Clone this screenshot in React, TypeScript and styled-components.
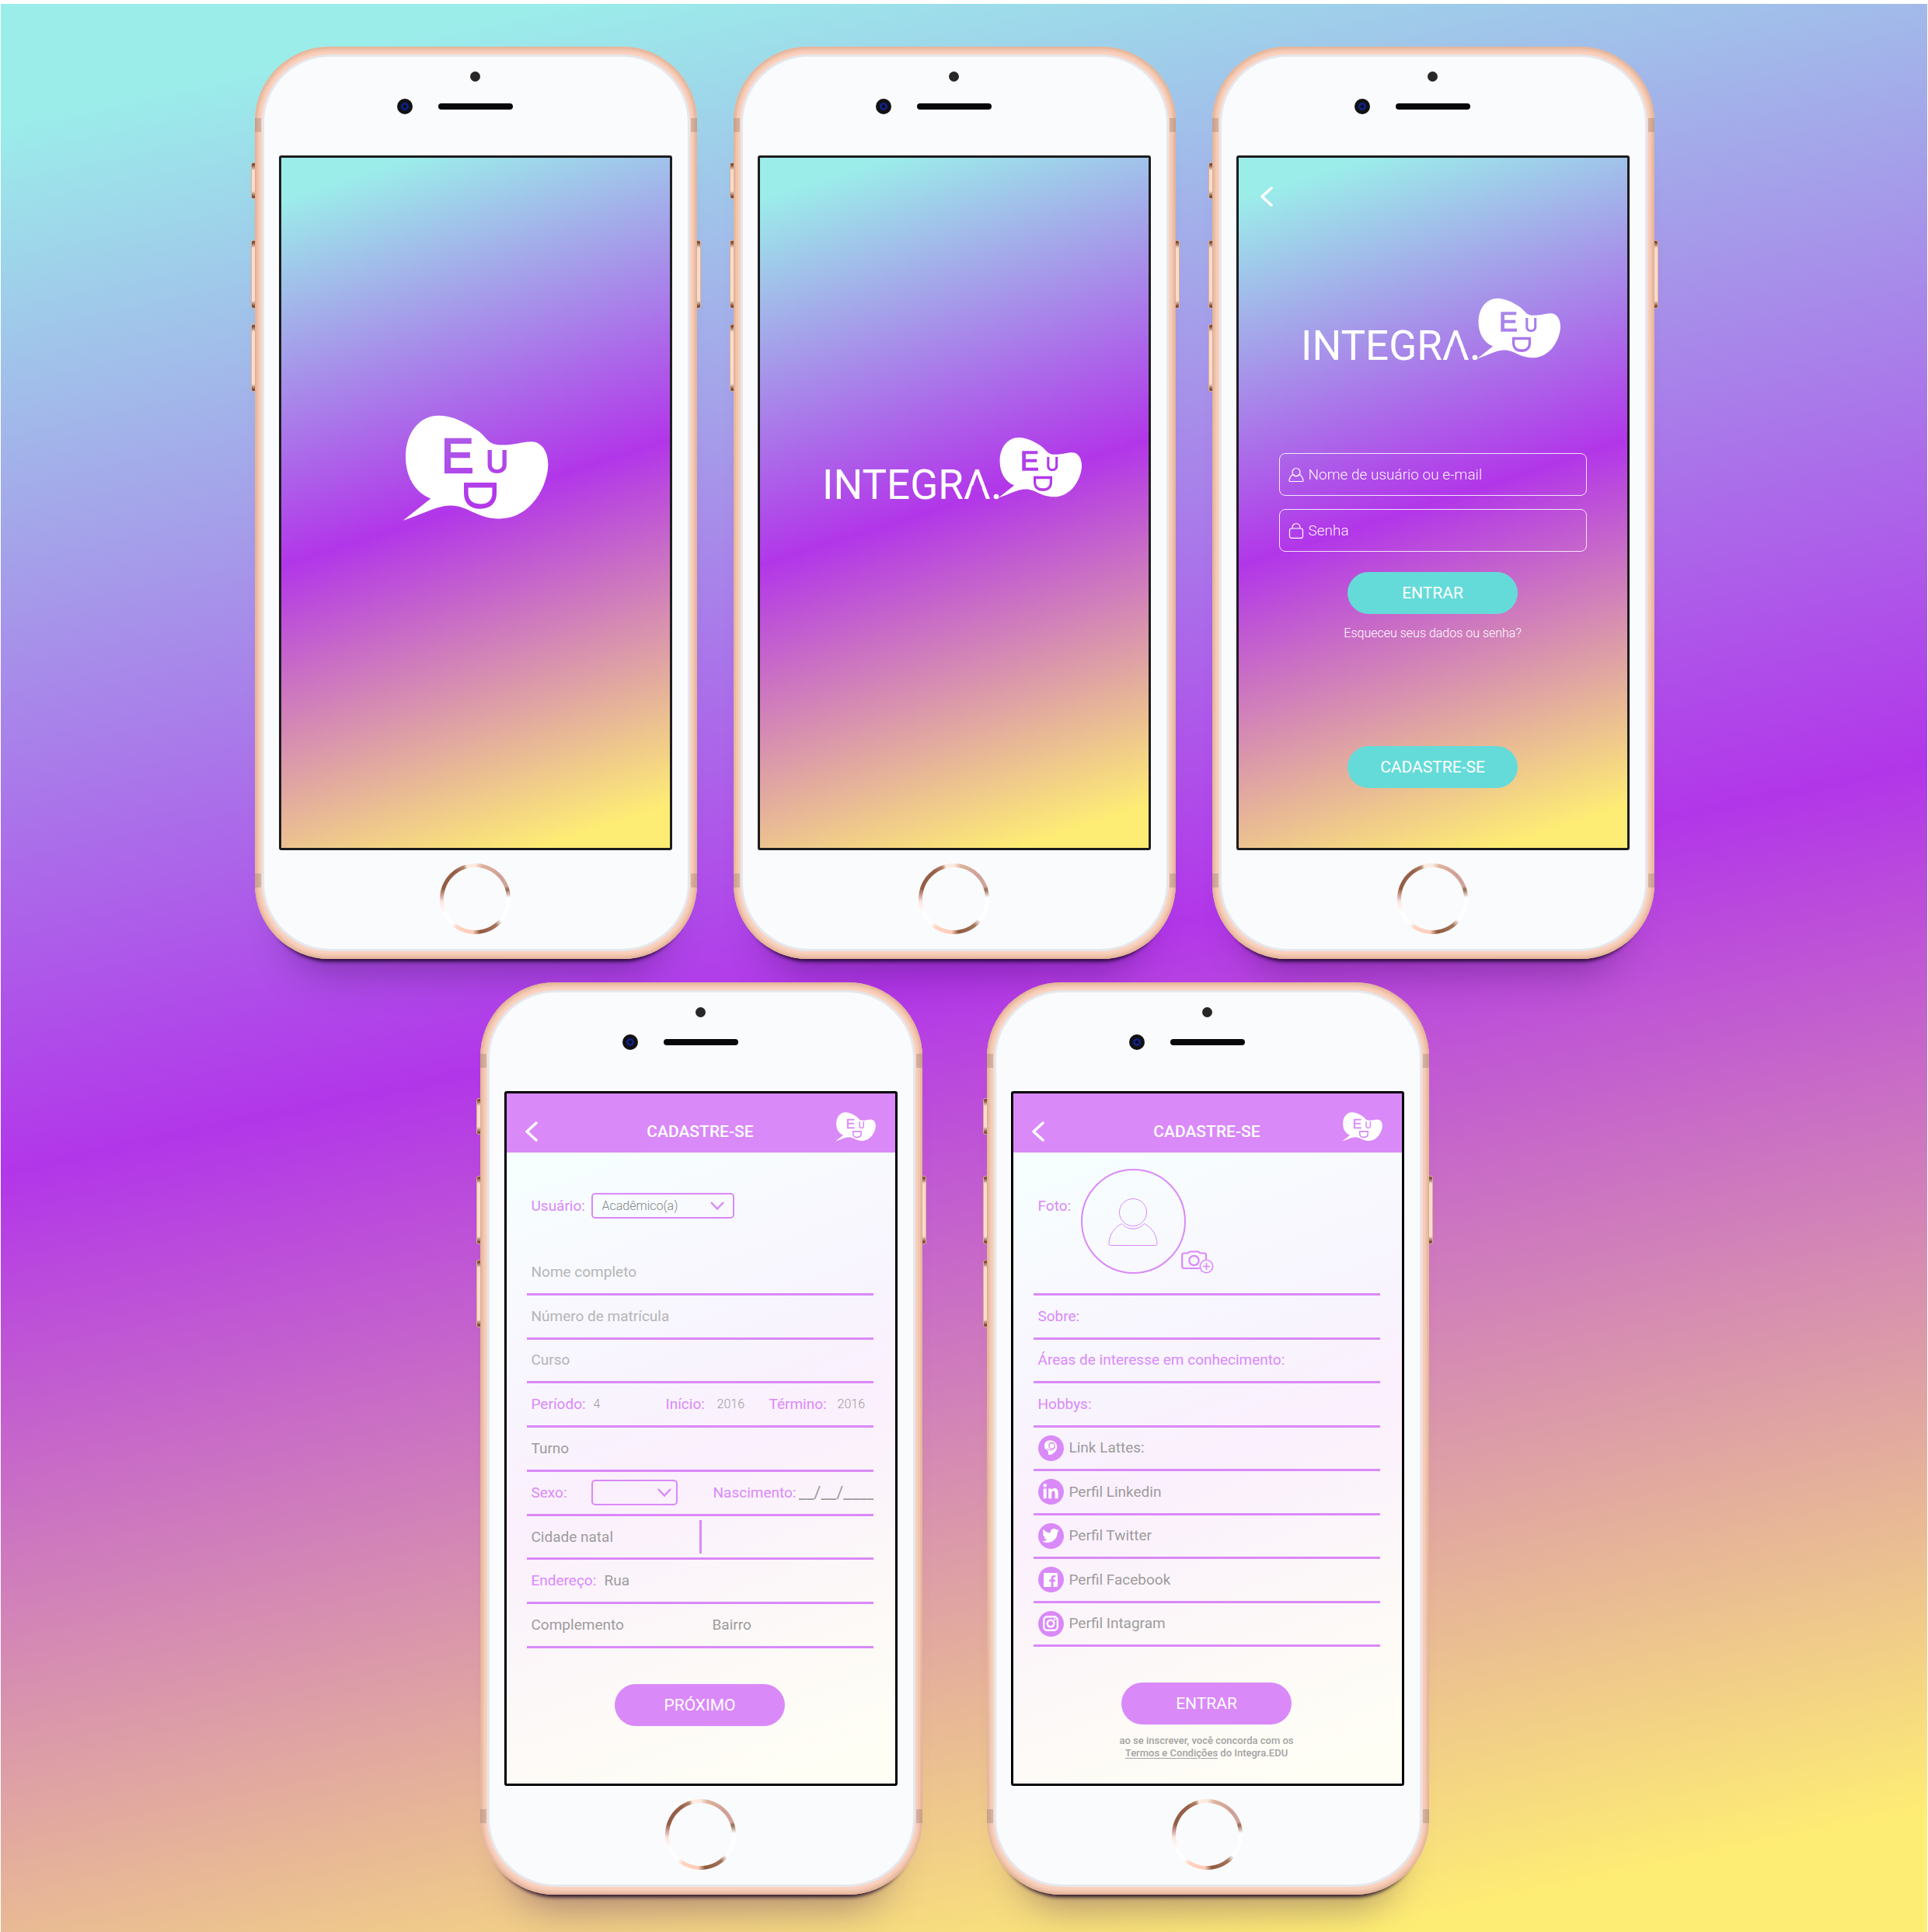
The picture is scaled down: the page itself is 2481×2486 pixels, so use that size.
import React from 'react';
import styled, { createGlobalStyle, css } from 'styled-components';
import { FaLinkedinIn, FaTwitter } from 'react-icons/fa';

const color = {
  teal: '#9bedea',
  purple: '#b236e9',
  yellow: '#feed74',
  aqua: '#65dbd9',
  lilac: '#da89f8',
  grey: '#9c9c9c',
  greyLight: '#b5b5b5',
  ink: '#1d1d1f',
};

const brandStops = `${color.teal} 5%, ${color.purple} 50%, ${color.yellow} 95%`;

const GlobalStyle = createGlobalStyle`
  *, *::before, *::after { box-sizing: border-box; }
  body {
    margin: 0;
    font-family: Roboto, "Liberation Sans", sans-serif;
    font-size: 19px;
    line-height: 24px;
  }
  button, input, select { font: inherit; color: inherit; }
`;

/* ---------- page ---------- */

const Page = styled.main`
  min-height: 100vh;
  display: flex;
  flex-direction: column;
  gap: 30px;
  padding: 55px 25px 48px 0;
  border: solid #fff;
  border-width: 5px 1px 1px;
  background: linear-gradient(168deg, ${brandStops});
`;

const PhoneRow = styled.section<{ $gap: number }>`
  display: flex;
  flex-wrap: wrap;
  justify-content: center;
  gap: 30px ${(p) => p.$gap}px;
`;

/* ---------- phone ---------- */

const Body = styled.article`
  position: relative;
  width: 569px;
  padding: 10px 9px;
  border-radius: 96px;
  background: #fdd5c2;
  box-shadow:
    inset 0 0 7px 3px #dba98c,
    0 15px 5px -12px rgba(20, 0, 35, 0.9),
    0 60px 50px -45px rgba(40, 0, 70, 0.35);
`;

const Band = styled.span<{ $side: 'left' | 'right'; $edge: 'top' | 'bottom' }>`
  position: absolute;
  width: 8px;
  height: 18px;
  background: rgba(150, 120, 105, 0.35);
  ${(p) => p.$side}: 0;
  ${(p) => p.$edge}: 92px;
`;

const SideKey = styled.span<{ $side: 'left' | 'right'; $top: number; $height: number }>`
  position: absolute;
  top: ${(p) => p.$top}px;
  width: 6px;
  height: ${(p) => p.$height}px;
  background: linear-gradient(#7a4a35 2px, #fbdccc 9px, #fbdccc calc(100% - 9px), #7a4a35 calc(100% - 2px));
  border: 1px solid #dcae95;
  ${(p) =>
    p.$side === 'left'
      ? css`
          left: -5px;
          border-radius: 3px 0 0 3px;
        `
      : css`
          right: -5px;
          border-radius: 0 3px 3px 0;
        `}
`;

const Glass = styled.div`
  display: flex;
  flex-direction: column;
  padding: 0 20px 0 19px;
  border: 3px solid #e6e7ea;
  border-radius: 88px;
  background: #fafbfd;
  box-shadow: 0 0 2px #f6c9c4;
`;

const TopBezel = styled.div`
  height: 127px;
  display: flex;
  flex-direction: column;
  align-items: center;
  gap: 22px;
  padding-top: 19px;
`;

const Sensor = styled.span`
  width: 13px;
  height: 13px;
  border-radius: 50%;
  background: #272727;
`;

const Earpiece = styled.div`
  align-self: stretch;
  display: grid;
  grid-template-columns: 1fr 96px 1fr;
  align-items: center;
`;

const Lens = styled.span`
  justify-self: end;
  width: 20px;
  height: 20px;
  margin-right: 33px;
  border: 5px solid #121214;
  border-radius: 50%;
  background: radial-gradient(#050a20 25%, #13269a 45%, #0a1346);
`;

const Speaker = styled.span`
  height: 8px;
  border-radius: 4px;
  background: #08080a;
`;

const BottomBezel = styled.div`
  height: 127px;
  display: flex;
  justify-content: center;
  padding-top: 17px;
`;

const HomeButton = styled.button`
  width: 91px;
  height: 91px;
  padding: 0;
  border: 0;
  border-radius: 50%;
  background:
    radial-gradient(circle, #fafbfd 40px, transparent 41px),
    conic-gradient(
      #fbeae0 0deg, #dfb39c 12deg, #cf9f96 45deg, #d0a59b 68deg, #97684d 74deg, #ffffff 88deg,
      #ffffff 130deg, #a5745a 142deg, #8f5a3f 172deg, #ffcdb8 184deg, #ffd3c1 212deg, #ffffff 222deg,
      #ffffff 245deg, #fde6e2 265deg, #cf9f96 276deg, #935c43 288deg, #96614a 325deg, #b48368 340deg,
      #fdece2 346deg, #fbeae0 360deg
    );
`;

type ScreenTone = 'brand' | 'pale';

const Screen = styled.div<{ $tone: ScreenTone }>`
  height: 894px;
  display: flex;
  flex-direction: column;
  border: 3px solid ${(p) => (p.$tone === 'brand' ? color.ink : '#000')};
  border-radius: 3px;
  background: ${(p) =>
    p.$tone === 'brand'
      ? `linear-gradient(162deg, ${brandStops})`
      : 'linear-gradient(160deg, #f6fffe 9%, #f8fafe 22%, #f8f4fe 40%, #fbf0fd 53%, #fcf8f8 74%, #fffef5 95%)'};
`;

function Phone({ tone = 'brand', children }: { tone?: ScreenTone; children: React.ReactNode }) {
  return (
    <Body>
      <SideKey $side="left" $top={149} $height={47} />
      <SideKey $side="left" $top={249} $height={88} />
      <SideKey $side="left" $top={357} $height={87} />
      <SideKey $side="right" $top={249} $height={88} />
      <Band $side="left" $edge="top" />
      <Band $side="right" $edge="top" />
      <Band $side="left" $edge="bottom" />
      <Band $side="right" $edge="bottom" />
      <Glass>
        <TopBezel>
          <Sensor />
          <Earpiece>
            <Lens />
            <Speaker />
          </Earpiece>
        </TopBezel>
        <Screen $tone={tone}>{children}</Screen>
        <BottomBezel>
          <HomeButton type="button" aria-label="Início" />
        </BottomBezel>
      </Glass>
    </Body>
  );
}

/* ---------- brand marks ---------- */

const bubblePath =
  'M57 479L164 394C100 370 67 305 67 232C67 140 120 73 195 73C255 73 315 110 350 134C385 162 385 187 440 187C490 187 520 174 552 174C595 174 618 215 618 262C618 340 555 472 430 472C340 472 310 421 240 421C190 421 130 455 57 479Z';

function BubbleShape({ id }: { id: string }) {
  return (
    <>
      <mask id={id} maskUnits="userSpaceOnUse" x="50" y="66" width="580" height="420">
        <rect x="50" y="66" width="580" height="420" fill="#fff" />
        <g fill="#000">
          <text x="205" y="294" fontSize="187" fontFamily="Liberation Sans, sans-serif" stroke="#000" strokeWidth="7">E</text>
          <text x="375" y="297" fontSize="124" fontFamily="Inter, sans-serif" fontWeight="600">U</text>
          <text transform="translate(292 319) rotate(90)" x="0" y="0" fontSize="172" fontFamily="Inter, sans-serif" fontWeight="500">D</text>
        </g>
      </mask>
      <path d={bubblePath} fill="#fff" mask={`url(#${id})`} />
    </>
  );
}

const BubbleSvg = styled.svg<{ $width: number }>`
  display: block;
  width: ${(p) => p.$width}px;
  height: auto;
`;

function Bubble({ id, width }: { id: string; width: number }) {
  return (
    <BubbleSvg $width={width} viewBox="55 71 565 410" role="img" aria-label="EUD">
      <BubbleShape id={id} />
    </BubbleSvg>
  );
}

const LogoSvg = styled.svg`
  display: block;
  width: 342px;
  height: auto;
  overflow: visible;
`;

function Logo({ id }: { id: string }) {
  return (
    <LogoSvg viewBox="45 66 1026 243" role="img" aria-label="Integra.EDU">
      <mask id={`${id}-word`} maskUnits="userSpaceOnUse" x="40" y="130" width="680" height="230">
        <rect x="40" y="130" width="680" height="230" fill="#fff" />
        <path d="M627 255H663L670 282H620Z" fill="#000" />
      </mask>
      <text x="48" y="305" fontFamily="Roboto, sans-serif" fontSize="159" fill="#fff" mask={`url(#${id}-word)`}>INTEGRA</text>
      <circle cx="720" cy="297" r="10" fill="#fff" />
      <g transform="translate(695.3 27.1) scale(.574)">
        <BubbleShape id={`${id}-bubble`} />
      </g>
    </LogoSvg>
  );
}

/* ---------- shared controls ---------- */

const BackButton = styled.button`
  width: 16px;
  height: 28px;
  padding: 0;
  border: 0;
  background: none;
  color: #fff;
  svg { display: block; width: 16px; height: 28px; }
`;

function Back() {
  return (
    <BackButton type="button" aria-label="Voltar">
      <svg viewBox="0 0 16 28" fill="none" stroke="currentColor" strokeWidth="3.500" strokeLinecap="round" strokeLinejoin="round">
        <path d="M14 3L2 14L14 25" />
      </svg>
    </BackButton>
  );
}

const Pill = styled.button<{ $tint: string }>`
  width: 219px;
  height: 54px;
  flex: none;
  align-self: center;
  padding: 0;
  border: 0;
  border-radius: 27px;
  background: ${(p) => p.$tint};
  color: #fff;
  font-size: 21px;
`;

/* ---------- splash ---------- */

const Splash = styled.div`
  flex: 1;
  display: flex;
  align-items: center;
  justify-content: center;
  padding-bottom: 90px;
`;

/* ---------- login ---------- */

const Login = styled.form`
  flex: 1;
  display: flex;
  flex-direction: column;
  align-items: center;
  padding: 36px 52px 0;
  color: #fff;
`;

const LoginTop = styled.div`
  display: flex;
  align-self: flex-start;
  margin-left: -24px;
  margin-bottom: 116px;
`;

const LoginFields = styled.div`
  align-self: stretch;
  display: grid;
  gap: 17px;
  margin: 119px 0 26px;
`;

const LoginField = styled.label`
  height: 55px;
  display: flex;
  align-items: center;
  gap: 6px;
  padding: 0 11px;
  border: 1px solid rgba(255, 255, 255, 0.85);
  border-radius: 8px;
  svg { flex: none; width: 20px; height: 20px; }
`;

const LoginInput = styled.input`
  flex: 1;
  min-width: 0;
  padding: 0;
  border: 0;
  background: none;
  outline: none;
  font-size: 19px;
  font-weight: 300;
  &::placeholder { color: #fff; opacity: 0.95; }
`;

const ForgotLink = styled.a`
  margin: 13px 0 133px;
  color: #fff;
  font-size: 16px;
  font-weight: 300;
  text-decoration: none;
`;

/* ---------- sign-up ---------- */

const Header = styled.header`
  height: 76px;
  flex: none;
  display: grid;
  grid-template-columns: 52px 1fr 52px;
  align-items: center;
  padding: 22px 25px 0 24px;
  background: ${color.lilac};
  color: #fff;
`;

const Title = styled.h1`
  margin: 0;
  text-align: center;
  font-size: 21px;
  font-weight: 500;
`;

const MarkSlot = styled.div`
  padding-bottom: 12px;
`;

function SignUpHeader({ id }: { id: string }) {
  return (
    <Header>
      <Back />
      <Title>CADASTRE-SE</Title>
      <MarkSlot>
        <Bubble id={id} width={52} />
      </MarkSlot>
    </Header>
  );
}

const Form = styled.form`
  flex: 1;
  display: flex;
  flex-direction: column;
  padding: 0 28px 0 26px;
  color: ${color.grey};
`;

const UserType = styled.div`
  height: 127px;
  display: grid;
  grid-template-columns: 77px 184px;
  align-content: start;
  align-items: center;
  padding: 52px 0 0 6px;
`;

const Rows = styled.div`
  flex: 1;
  display: flex;
  flex-direction: column;
`;

const Row = styled.div<{ $columns?: string }>`
  flex: 1;
  display: grid;
  grid-template-columns: ${(p) => p.$columns ?? '1fr'};
  align-items: center;
  padding-left: 6px;
  border-bottom: 3px solid ${color.lilac};
`;

const Label = styled.label`
  color: ${color.lilac};
`;

const Input = styled.input<{ $kind?: 'value' | 'light' | 'date' }>`
  width: 100%;
  min-width: 0;
  padding: 0;
  border: 0;
  background: none;
  outline: none;
  &::placeholder {
    color: ${(p) => (p.$kind === 'light' ? color.greyLight : color.grey)};
    opacity: 1;
  }
  ${(p) => p.$kind === 'value' && 'font-size: 16px; font-weight: 300;'}
  ${(p) => p.$kind === 'date' && 'font-size: 22px;'}
`;

const SelectBox = styled.span<{ $inset: number }>`
  position: relative;
  display: block;
  svg {
    position: absolute;
    top: 11px;
    right: ${(p) => p.$inset}px;
    width: 18px;
    height: 11px;
    color: ${color.lilac};
    pointer-events: none;
  }
`;

const Select = styled.select`
  display: block;
  width: 100%;
  height: 33px;
  padding: 0 12px;
  border: 2px solid ${color.lilac};
  border-radius: 5px;
  background: none;
  appearance: none;
  font-size: 16px;
  font-weight: 300;
  color: #858585;
`;

function Dropdown({ id, inset, options }: { id: string; inset: number; options: string[] }) {
  return (
    <SelectBox $inset={inset}>
      <Select id={id}>
        {options.map((o) => (
          <option key={o}>{o}</option>
        ))}
      </Select>
      <svg viewBox="0 0 18 11" fill="none" stroke="currentColor" strokeWidth="2.400">
        <path d="M1 1L9 9.500L17 1" />
      </svg>
    </SelectBox>
  );
}

const Divider = styled.span`
  width: 3px;
  height: 43px;
  background: ${color.lilac};
`;

const Footer = styled.div<{ $height: number }>`
  height: ${(p) => p.$height}px;
  display: flex;
  flex-direction: column;
  padding-top: 46px;
`;

const Photo = styled.div`
  height: 184px;
  display: flex;
  align-items: flex-start;
  padding: 21px 0 0 6px;
  border-bottom: 3px solid ${color.lilac};
`;

const PhotoLabel = styled(Label)`
  width: 55px;
  padding-top: 36px;
`;

const Avatar = styled.span`
  width: 135px;
  height: 135px;
  display: grid;
  place-items: center;
  border: 2px solid ${color.lilac};
  border-radius: 50%;
  svg { width: 64px; height: 64px; }
`;

const CameraButton = styled.button`
  align-self: flex-start;
  margin: 105px 0 0 -6px;
  padding: 0;
  border: 0;
  background: none;
  color: ${color.lilac};
  svg { display: block; width: 42px; height: 30px; }
`;

const Badge = styled.span`
  width: 33px;
  height: 33px;
  display: grid;
  place-items: center;
  border-radius: 50%;
  background: ${color.lilac};
  color: #fff;
  svg { width: 22px; height: 22px; }
`;

const Terms = styled.p`
  margin: 13px 0 0;
  text-align: center;
  font-size: 13px;
  line-height: 16px;
  font-weight: 500;
  color: #a3a3a3;
`;

const TermsLink = styled.a`
  color: inherit;
  text-decoration: underline;
  text-underline-offset: 2px;
`;

const socials = [
  {
    id: 'lattes',
    text: 'Link Lattes:',
    icon: (
      <svg viewBox="0 0 22 22" fill="none">
        <path d="M3 9C2.500 4 6 1.500 10 1.500C15 1.500 18 4 19 8C20 13 17 17 12 19.500C10 20.500 8.500 20.500 8 19L7.500 14.500C4.500 14 3.300 12 3 9Z" fill="#fff" />
        <circle cx="12.500" cy="8.500" r="3.700" stroke={color.lilac} strokeWidth="1.300" />
        <path d="M3.500 13.500C7 12 8 13.500 12 14C15 14 17 11 16 8.500M8.800 7C9.500 4 13 3 15.500 5" stroke={color.lilac} strokeWidth="1" />
      </svg>
    ),
  },
  { id: 'linkedin', text: 'Perfil Linkedin', icon: <FaLinkedinIn /> },
  { id: 'twitter', text: 'Perfil Twitter', icon: <FaTwitter /> },
  {
    id: 'facebook',
    text: 'Perfil Facebook',
    icon: (
      <svg viewBox="0 0 22 22">
        <rect x="2" y="2" width="18" height="18" rx="1" fill="#fff" />
        <path d="M11.600 20V13.200H9.300V10.400H11.600V8.600C11.600 6.200 13 4.900 15.200 4.900H17.300V7.500H15.900C14.800 7.500 14.500 8 14.500 8.900V10.400H17.200L16.800 13.200H14.500V20Z" fill={color.lilac} />
      </svg>
    ),
  },
  {
    id: 'instagram',
    text: 'Perfil Intagram',
    icon: (
      <svg viewBox="0 0 22 22" fill="none" stroke="#fff">
        <rect x="2.200" y="2.200" width="17.600" height="17.600" rx="4.500" strokeWidth="2.400" />
        <circle cx="11" cy="11" r="4.300" strokeWidth="2.600" />
        <circle cx="16.200" cy="5.800" r="1.300" fill="#fff" stroke="none" />
      </svg>
    ),
  },
];

/* ---------- app ---------- */

export default function App() {
  return (
    <>
      <GlobalStyle />
      <Page>
        <PhoneRow $gap={47}>
          <Phone>
            <Splash>
              <Bubble id="splash-mark" width={188} />
            </Splash>
          </Phone>

          <Phone>
            <Splash>
              <Logo id="splash-logo" />
            </Splash>
          </Phone>

          <Phone>
            <Login>
              <LoginTop>
                <Back />
              </LoginTop>
              <Logo id="login-logo" />
              <LoginFields>
                <LoginField>
                  <svg viewBox="0 0 20 20" fill="none" stroke="currentColor" strokeWidth="1.200" strokeLinejoin="round">
                    <ellipse cx="10" cy="6.500" rx="5" ry="5" />
                    <path d="M6 9.500C3 11 1.500 14 1 17.500C1 18.300 1.300 18.500 2 18.500H18C18.700 18.500 19 18.300 19 17.500C18.500 14 17 11 14 9.500C12 12.800 8 12.800 6 9.500Z" />
                  </svg>
                  <LoginInput type="text" placeholder="Nome de usuário ou e-mail" aria-label="Nome de usuário ou e-mail" />
                </LoginField>
                <LoginField>
                  <svg viewBox="0 0 20 20" fill="none" stroke="currentColor" strokeWidth="1.200">
                    <rect x="1.500" y="7" width="17" height="12.400" rx="2.500" />
                    <path d="M5 7V6C5 -1 15 -1 15 6V7" />
                  </svg>
                  <LoginInput type="password" placeholder="Senha" aria-label="Senha" />
                </LoginField>
              </LoginFields>
              <Pill type="button" $tint={color.aqua}>ENTRAR</Pill>
              <ForgotLink href="#recuperar">Esqueceu seus dados ou senha?</ForgotLink>
              <Pill type="button" $tint={color.aqua}>CADASTRE-SE</Pill>
            </Login>
          </Phone>
        </PhoneRow>

        <PhoneRow $gap={83}>
          <Phone tone="pale">
            <SignUpHeader id="mark-a" />
            <Form>
              <UserType>
                <Label htmlFor="usuario">Usuário:</Label>
                <Dropdown id="usuario" inset={13} options={['Acadêmico(a)']} />
              </UserType>
              <Rows>
                <Row><Input $kind="light" placeholder="Nome completo" aria-label="Nome completo" /></Row>
                <Row><Input $kind="light" placeholder="Número de matrícula" aria-label="Número de matrícula" /></Row>
                <Row><Input $kind="light" placeholder="Curso" aria-label="Curso" /></Row>
                <Row $columns="80px 93px 66px 67px 88px 1fr">
                  <Label htmlFor="periodo">Período:</Label>
                  <Input $kind="value" id="periodo" defaultValue="4" />
                  <Label htmlFor="inicio">Início:</Label>
                  <Input $kind="value" id="inicio" defaultValue="2016" />
                  <Label htmlFor="termino">Término:</Label>
                  <Input $kind="value" id="termino" defaultValue="2016" />
                </Row>
                <Row><Input placeholder="Turno" aria-label="Turno" /></Row>
                <Row $columns="77px 111px 46px 110px 1fr">
                  <Label htmlFor="sexo">Sexo:</Label>
                  <Dropdown id="sexo" inset={8} options={['']} />
                  <span />
                  <Label htmlFor="nascimento">Nascimento:</Label>
                  <Input $kind="date" id="nascimento" placeholder="__/__/____" />
                </Row>
                <Row $columns="216px 20px 1fr">
                  <Input placeholder="Cidade natal" aria-label="Cidade natal" />
                  <Divider />
                  <Input aria-label="Estado natal" />
                </Row>
                <Row $columns="94px 1fr">
                  <Label htmlFor="endereco">Endereço:</Label>
                  <Input id="endereco" placeholder="Rua" />
                </Row>
                <Row $columns="233px 1fr">
                  <Input placeholder="Complemento" aria-label="Complemento" />
                  <Input placeholder="Bairro" aria-label="Bairro" />
                </Row>
              </Rows>
              <Footer $height={174}>
                <Pill type="button" $tint={color.lilac}>PRÓXIMO</Pill>
              </Footer>
            </Form>
          </Phone>

          <Phone tone="pale">
            <SignUpHeader id="mark-b" />
            <Form>
              <Photo>
                <PhotoLabel as="span">Foto:</PhotoLabel>
                <Avatar>
                  <svg viewBox="0 0 64 64" fill="none" stroke={color.lilac} strokeWidth="1">
                    <circle cx="32" cy="20" r="17.500" />
                    <path d="M17.500 34.500C7 40 1 50 1 61C1 62 1.500 62.500 2.500 62.500H61.500C62.500 62.500 63 62 63 61C63 50 57 40 46.500 34.500C38 43.500 26 43.500 17.500 34.500Z" />
                  </svg>
                </Avatar>
                <CameraButton type="button" aria-label="Adicionar foto">
                  <svg viewBox="0 0 42 30" fill="none" stroke="currentColor" strokeWidth="2.200" strokeLinecap="round" strokeLinejoin="round">
                    <path d="M23 23H3.500C2 23 1.200 22 1.200 20.800V6C1.200 4.500 2 3.500 3.500 3.500H8.500L11 1.500H22L24.500 3.500H29.500C31 3.500 32 4.500 32 6V11" />
                    <circle cx="16.500" cy="13" r="6.200" />
                    <circle cx="32.500" cy="20.500" r="8.200" strokeWidth="1.600" />
                    <path d="M32.500 16.500V24.500M28.500 20.500H36.500" strokeWidth="1.600" />
                  </svg>
                </CameraButton>
              </Photo>
              <Rows>
                <Row $columns="70px 1fr">
                  <Label htmlFor="sobre">Sobre:</Label>
                  <Input id="sobre" />
                </Row>
                <Row $columns="330px 1fr">
                  <Label htmlFor="areas">Áreas de interesse em conhecimento:</Label>
                  <Input id="areas" />
                </Row>
                <Row $columns="80px 1fr">
                  <Label htmlFor="hobbys">Hobbys:</Label>
                  <Input id="hobbys" />
                </Row>
                {socials.map((s) => (
                  <Row key={s.id} $columns="40px 1fr">
                    <Badge>{s.icon}</Badge>
                    <Input id={s.id} placeholder={s.text} aria-label={s.text} />
                  </Row>
                ))}
              </Rows>
              <Footer $height={176}>
                <Pill type="button" $tint={color.lilac}>ENTRAR</Pill>
                <Terms>
                  ao se inscrever, você concorda com os
                  <br />
                  <TermsLink href="#termos">Termos e Condições</TermsLink> do Integra.EDU
                </Terms>
              </Footer>
            </Form>
          </Phone>
        </PhoneRow>
      </Page>
    </>
  );
}
